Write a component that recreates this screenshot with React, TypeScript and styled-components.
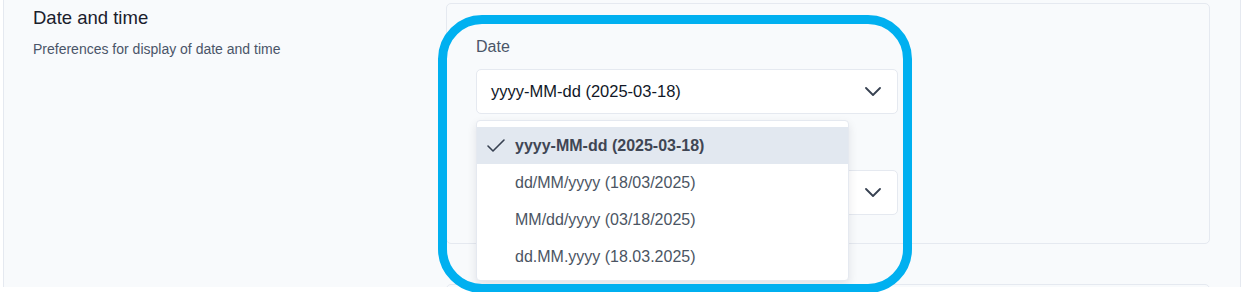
import * as React from 'react';
import styled, { createGlobalStyle } from 'styled-components';

const GlobalStyle = createGlobalStyle`
  html, body {
    margin: 0;
    padding: 0;
    background: #ffffff;
    font-family: "Liberation Sans", Arial, sans-serif;
  }
`;

const Frame = styled.div`
  position: relative;
  width: 1244px;
  height: 292px;
  overflow: hidden;
`;

const Page = styled.div`
  box-sizing: border-box;
  margin-left: 3px;
  width: 1238px;
  height: 287px;
  overflow: hidden;
  background: #f8fafc;
  border-left: 1px solid #e5e9f0;
  border-right: 1px solid #e5e9f0;
  padding: 3px 29px 0 29px;
`;

const Section = styled.section`
  display: grid;
  grid-template-columns: 413px 764px;
  align-items: start;
`;

const Intro = styled.div`
  display: flex;
  flex-direction: column;
  gap: 11px;
  padding-top: 4px;
`;

const Title = styled.h2`
  margin: 0;
  font-size: 18.5px;
  line-height: 22px;
  font-weight: normal;
  color: #1a202c;
`;

const Description = styled.p`
  margin: 0;
  font-size: 14px;
  line-height: 18px;
  color: #4a5568;
`;

const Cards = styled.div`
  display: flex;
  flex-direction: column;
  gap: 40px;
`;

const Card = styled.div<{ $height?: number }>`
  box-sizing: border-box;
  border: 1px solid #e5e9f0;
  border-radius: 5px;
  background: #f8fafc;
  padding: 33px 29px 28px 29px;
  min-height: ${(p) => (p.$height ? `${p.$height}px` : 'auto')};
`;

const Form = styled.div`
  width: 422px;
  display: flex;
  flex-direction: column;
  gap: 24px;
`;

const Field = styled.div`
  display: flex;
  flex-direction: column;
  gap: 12px;
`;

const Label = styled.label`
  font-size: 16px;
  line-height: 20px;
  color: #4a5568;
`;

// keeps the room of a label that the open menu covers
const LabelSlot = styled.div`
  height: 20px;
`;

const SelectWrap = styled.div`
  position: relative;
`;

const SelectBox = styled.div`
  box-sizing: border-box;
  height: 45px;
  display: flex;
  align-items: center;
  justify-content: space-between;
  padding: 0 16px 0 14px;
  background: #ffffff;
  border: 1px solid #e5e9f0;
  border-radius: 5px;
  font-size: 16.5px;
  color: #111827;
`;

const Menu = styled.ul`
  position: absolute;
  top: 51px;
  left: 0;
  z-index: 2;
  box-sizing: border-box;
  width: 373px;
  margin: 0;
  padding: 6px 0 5px;
  list-style: none;
  background: #ffffff;
  border: 1px solid #e5e9f0;
  border-radius: 4px;
  box-shadow: 0 4px 10px rgba(15, 23, 42, 0.1);
`;

const Option = styled.li<{ $selected?: boolean }>`
  position: relative;
  height: 37px;
  display: flex;
  align-items: center;
  padding-left: 38px;
  font-size: 16px;
  font-weight: ${(p) => (p.$selected ? 600 : 'normal')};
  color: ${(p) => (p.$selected ? '#3f4654' : '#4b5563')};
  background: ${(p) => (p.$selected ? '#e2e8f0' : 'transparent')};
`;

const CheckMark = styled.svg`
  position: absolute;
  left: 7px;
  top: 50%;
  margin-top: -12px;
`;

const Highlight = styled.div`
  position: absolute;
  left: 438px;
  top: 15px;
  width: 474px;
  height: 278px;
  box-sizing: border-box;
  border: 9px solid #00b0f0;
  border-radius: 44px;
  pointer-events: none;
  z-index: 5;
`;

function Chevron() {
  return (
    <svg width="16" height="9" viewBox="0 0 16 9" fill="none">
      <polyline
        points="1,1 8,8 15,1"
        stroke="#374151"
        strokeWidth="1.8"
        strokeLinecap="round"
        strokeLinejoin="round"
      />
    </svg>
  );
}

const dateFormats = [
  'yyyy-MM-dd (2025-03-18)',
  'dd/MM/yyyy (18/03/2025)',
  'MM/dd/yyyy (03/18/2025)',
  'dd.MM.yyyy (18.03.2025)',
];

export default function App() {
  const [selected] = React.useState(dateFormats[0]);

  return (
    <>
      <GlobalStyle />
      <Frame>
        <Page>
          <Section>
            <Intro>
              <Title>Date and time</Title>
              <Description>Preferences for display of date and time</Description>
            </Intro>
            <Cards>
              <Card>
                <Form>
                  <Field>
                    <Label>Date</Label>
                    <SelectWrap>
                      <SelectBox>
                        <span>{selected}</span>
                        <Chevron />
                      </SelectBox>
                      <Menu>
                        {dateFormats.map((f) => (
                          <Option key={f} $selected={f === selected}>
                            {f === selected && (
                              <CheckMark width="24" height="24" viewBox="0 0 24 24" fill="none">
                                <path
                                  d="M20 6 9 17l-5-5"
                                  stroke="#374151"
                                  strokeWidth="1.6"
                                  strokeLinecap="round"
                                  strokeLinejoin="round"
                                />
                              </CheckMark>
                            )}
                            {f}
                          </Option>
                        ))}
                      </Menu>
                    </SelectWrap>
                  </Field>
                  <Field>
                    <LabelSlot />
                    <SelectBox>
                      <span />
                      <Chevron />
                    </SelectBox>
                  </Field>
                </Form>
              </Card>
              <Card $height={120} />
            </Cards>
          </Section>
        </Page>
        <Highlight />
      </Frame>
    </>
  );
}
